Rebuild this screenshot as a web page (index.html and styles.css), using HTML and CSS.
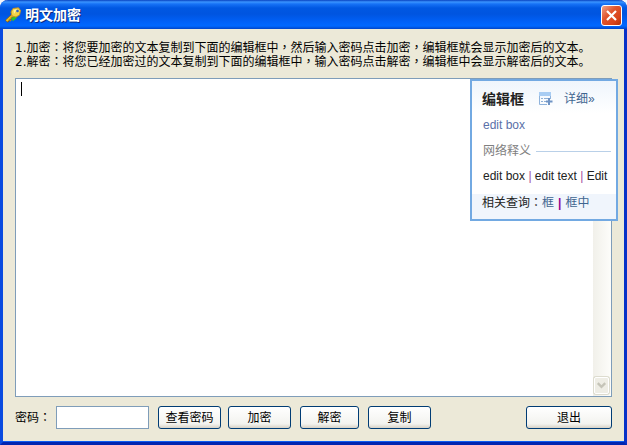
FILE: index.html
```html
<!DOCTYPE html>
<html lang="zh-CN">
<head>
    <meta charset="UTF-8">
    <meta name="viewport" content="width=device-width, initial-scale=1.0">
    <title>明文加密</title>
    <link rel="stylesheet" href="styles.css">
</head>
<body>

    <div class="window">
        <header class="titlebar">
            <svg class="key" viewBox="0 0 16 16" aria-hidden="true">
                <path d="M8 8L1.500 14.500" stroke="#8a5a08" stroke-width="3.500"/>
                <path d="M8 8L1.500 14" stroke="#e8c22c" stroke-width="2"/>
                <path d="M4 12l2 2M6 10l2 2" stroke="#b98412" stroke-width="1.500"/>
                <path d="M7 13l4-3.500" stroke="#2fc22f" stroke-width="3"/>
                <path d="M8 1.500L13.500 .8L15.500 3.500L14.500 8L11 10L7 9L6 5Z" fill="#f2d449" stroke="#c89420"/>
                <path d="M8.500 3L12 2L9 7Z" fill="#fdf4a4"/>
                <circle cx="12.500" cy="4" r="1.300" fill="#2a62c8"/>
            </svg>
            <h1>明文加密</h1>
            <button type="button" class="close" aria-label="关闭">
                <svg viewBox="0 0 19 19" aria-hidden="true">
                    <path d="M5 5l9 9M14 5l-9 9" stroke="#fff" stroke-width="2.200"/>
                </svg>
            </button>
        </header>

        <form class="content">
            <div class="help">
                <p>1.加密<span class="mid" lang="zh-TW">：</span>将您要加密的文本复制到下面的编辑框中<span class="mid" lang="zh-TW">，</span>然后输入密码点击加密<span class="mid" lang="zh-TW">，</span>编辑框就会显示加密后的文本。</p>
                <p>2.解密<span class="mid" lang="zh-TW">：</span>将您已经加密过的文本复制到下面的编辑框中<span class="mid" lang="zh-TW">，</span>输入密码点击解密<span class="mid" lang="zh-TW">，</span>编辑框中会显示解密后的文本。</p>
            </div>

            <div class="editor">
                <textarea class="text" aria-label="编辑框"></textarea>
                <span class="caret"></span>
                <div class="scrollbar">
                    <span class="arrow">
                        <svg viewBox="0 0 14 15" aria-hidden="true">
                            <path d="M3 5.500l4 4l4-4" fill="none" stroke="#c5c4b8" stroke-width="2.500"/>
                        </svg>
                    </span>
                </div>

                <!-- 划词翻译 -->
                <aside class="dict">
                    <div class="dict-head">
                        <strong>编辑框</strong>
                        <svg class="add" viewBox="0 0 14 14" aria-hidden="true">
                            <path d="M.5 1v11.500H8M11.500 1v6" fill="none" stroke="#8fb3dc"/>
                            <path d="M0 0h12v4H0z" fill="#a9cdf3"/>
                            <path d="M2 6.500h2M5 6.500h4M2 9.500h2M5 9.500h2" stroke="#8fb0d6"/>
                            <path d="M10 6v7M7 9.500h6.500" stroke="#6f93c4" stroke-width="2"/>
                        </svg>
                        <a href="#">详细»</a>
                    </div>
                    <p class="meaning">edit box</p>
                    <div class="web-title">网络释义</div>
                    <p class="web">edit box <i>|</i> edit text <i>|</i> Edit</p>
                    <div class="related">相关查询<span class="mid" lang="zh-TW">：</span><a href="#">框</a><b>|</b><a href="#">框中</a></div>
                </aside>
            </div>

            <div class="actions">
                <label for="password">密码<span class="mid" lang="zh-TW">：</span></label>
                <input type="password" id="password">
                <button type="button" class="btn">查看密码</button>
                <button type="button" class="btn">加密</button>
                <button type="button" class="btn narrow">解密</button>
                <button type="button" class="btn">复制</button>
                <button type="button" class="btn exit">退出</button>
            </div>
        </form>
    </div>

</body>
</html>
```

FILE: styles.css
```css
* {
    box-sizing: border-box;
}
body {
    margin: 0;
    background-color: #f4f6fb;
    font-family: "DejaVu Sans", "Noto Sans CJK SC", sans-serif;
    font-size: 12px;
    line-height: 14px;
    color: #000;
}
p, h1 {
    margin: 0;
}
button, input, textarea {
    font: inherit;
    color: inherit;
}
a {
    color: #3f6590;
    text-decoration: none;
}
/* 标点居中 */
.mid {
    font-family: "DejaVu Sans", "Noto Sans CJK TC", sans-serif;
}
.window {
    display: flex;
    flex-direction: column;
    min-height: 100vh;
    background-color: #ece9d8;
    border: 3px solid #0a4be0;
    border-top: 0;
    border-right-color: #0831c8;
    border-bottom-color: #0025b0;
    border-radius: 8px 8px 0 0;
    box-shadow: inset 0 -1px 0 #0f5cf0;
}

/* 标题栏 */
.titlebar {
    display: flex;
    align-items: center;
    height: 29px;
    margin: 0 -3px;
    padding: 0 5px;
    border-radius: 8px 8px 0 0;
    background: linear-gradient(#0842c0 0, #3a94ff 2px, #1672f6 4px, #0058e2 8px, #0055e0 14px, #0061f8 22px, #0068ff 26px, #0044c8 29px);
}
.key {
    width: 16px;
    height: 16px;
    fill: none;
}
h1 {
    flex: 1;
    margin-left: 4px;
    font-size: 14px;
    line-height: 18px;
    color: #fff;
    text-shadow: 1px 1px 0 #0a2a80;
}
.close {
    width: 21px;
    height: 21px;
    margin-top: 2px;
    padding: 0;
    border: 1px solid #fff;
    border-radius: 3px;
    background: linear-gradient(135deg, #f0a288, #e0552e 40%, #d8431a 75%, #b03008);
}
.close svg {
    display: block;
}

.content {
    flex: 1;
    display: flex;
    flex-direction: column;
    padding: 12px 12px 13px;
}
.help {
    height: 28px;
    white-space: nowrap;
}

/* 编辑框 */
.editor {
    flex: 1;
    display: flex;
    position: relative;
    margin-top: 9px;
    border: 1px solid #7f9db9;
    background-color: #fff;
}
.text {
    flex: 1;
    padding: 3px 5px;
    border: 0;
    outline: 0;
    resize: none;
    background-color: #fff;
}
.caret {
    position: absolute;
    left: 5px;
    top: 3px;
    width: 1px;
    height: 14px;
    background-color: #000;
}
.scrollbar {
    display: flex;
    align-items: flex-end;
    width: 18px;
    padding: 0 2px 2px 1px;
    background: linear-gradient(90deg, #f1f0ea, #fdfdfa);
}
.arrow {
    width: 15px;
    height: 17px;
    border: 1px solid #fff;
    border-radius: 2px;
    background-color: #eeede5;
    box-shadow: 0 0 0 1px #dddccf;
}
.arrow svg {
    display: block;
}

/* 词典弹窗 */
.dict {
    position: absolute;
    top: 0;
    right: -7px;
    width: 148px;
    border: 2px solid #72a9e2;
    background: linear-gradient(#eff5fc, #fff 32px);
    font-family: "Liberation Sans", "Noto Sans CJK SC", sans-serif;
    color: #222;
}
.dict-head {
    display: flex;
    align-items: center;
    height: 36px;
    padding-left: 10px;
}
.dict-head strong {
    font-size: 14px;
}
.add {
    width: 14px;
    height: 14px;
    margin: 0 11px 0 15px;
}
.meaning {
    padding: 1px 11px;
    color: #5a70a8;
}
.web-title {
    display: flex;
    align-items: center;
    gap: 5px;
    padding: 11px 5px 0 11px;
    color: #808080;
}
.web-title::after {
    content: "";
    flex: 1;
    height: 1px;
    background-color: #b9d0e8;
}
.web {
    padding: 11px 0 11px 11px;
    white-space: nowrap;
}
.web i {
    font-style: normal;
    color: #a050a0;
}
.related {
    height: 25px;
    padding: 2px 10px;
    background-color: #f0f5fc;
}
.related b {
    margin: 0 4px;
    color: #900090;
}

/* 底部按钮 */
.actions {
    display: flex;
    align-items: center;
    margin-top: 9px;
}
.actions label {
    width: 41px;
}
.actions input {
    width: 93px;
    height: 23px;
    margin-right: 2px;
    padding: 2px 4px;
    border: 1px solid #7f9db9;
    background-color: #fff;
}
.btn {
    width: 63px;
    height: 23px;
    margin-left: 7px;
    padding: 0;
    border: 1px solid #003c74;
    border-radius: 3px;
    background: linear-gradient(#fff, #f3f3ef 80%, #d8d2c6);
    white-space: nowrap;
}
.btn.narrow {
    width: 59px;
    margin: 0 2px 0 9px;
}
.btn.exit {
    width: 86px;
    margin-left: auto;
}
```
